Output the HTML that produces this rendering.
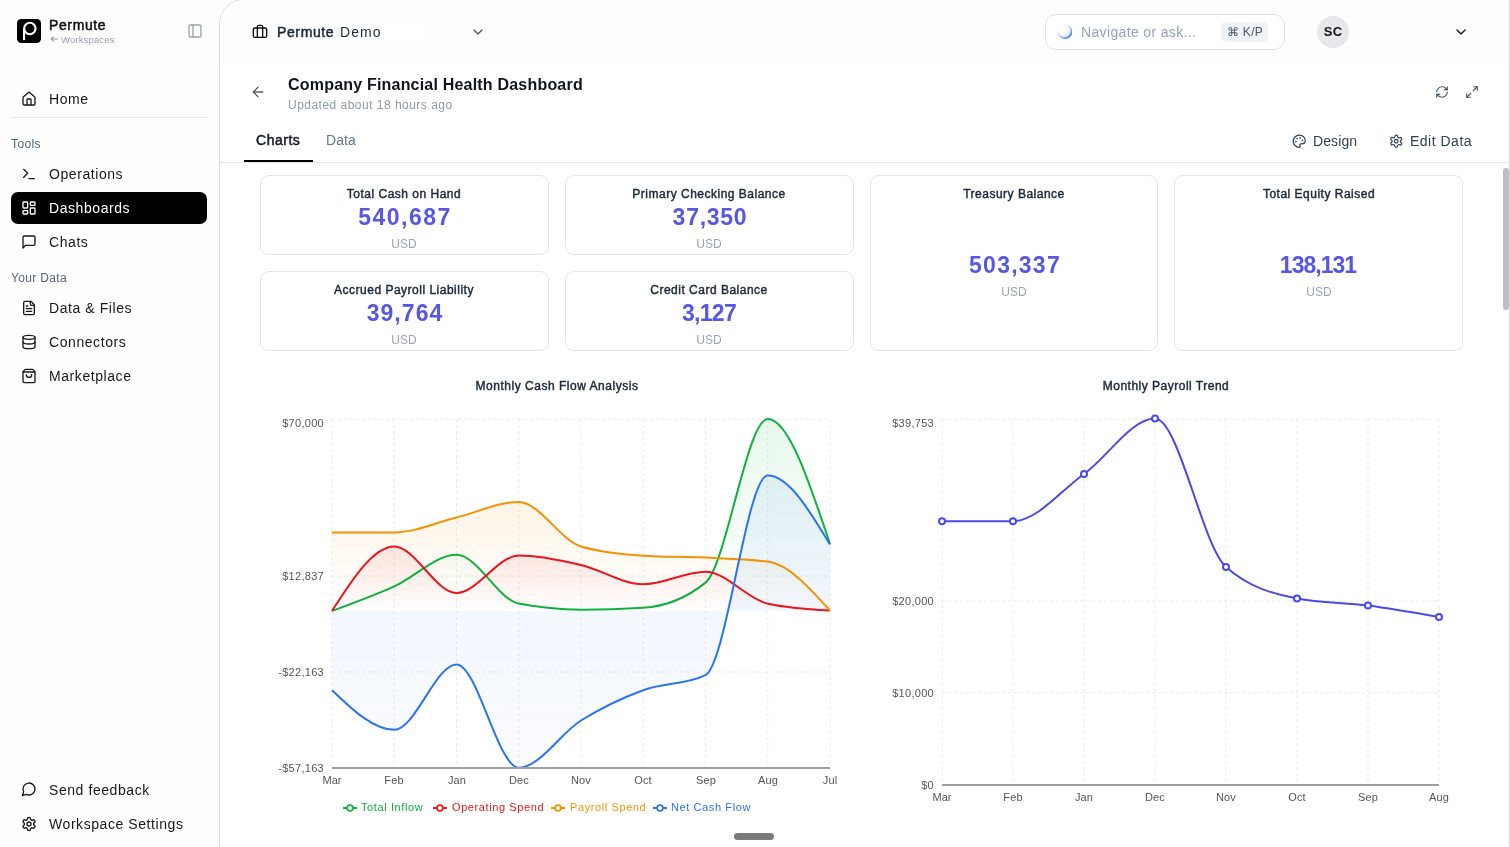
<!DOCTYPE html>
<html><head><meta charset="utf-8"><title>Company Financial Health Dashboard</title>
<style>
html,body{margin:0;padding:0;}
body{width:1510px;height:847px;overflow:hidden;position:relative;background:#fefefe;font-family:'Liberation Sans', sans-serif;}
.t{position:absolute;white-space:nowrap;line-height:1;will-change:transform;}
.ic{position:absolute;overflow:visible;}
.abs{position:absolute;}
</style></head><body>

<svg class="abs" style="left:17px;top:19px;width:24px;height:24px" viewBox="0 0 24 24"><rect x="0" y="0" width="24" height="24" rx="4.2" fill="#000"/><circle cx="12.85" cy="9.5" r="5.7" fill="none" stroke="#fff" stroke-width="2.1"/><rect x="6" y="9.5" width="2.1" height="11.6" fill="#fff"/></svg>
<div class="t" style="left:49.20px;top:18.28px;font-size:14px;font-weight:400;color:#111;letter-spacing:0.62px;-webkit-text-stroke:0.5px #111;">Permute</div>
<svg class="abs" style="left:50px;top:35.5px;width:8px;height:6px" viewBox="0 0 8 6"><path d="M7.5 3H1.2M3.4 0.9L1.2 3l2.2 2.1" fill="none" stroke="#8d99ab" stroke-width="1.1" stroke-linecap="round" stroke-linejoin="round"/></svg>
<div class="t" style="left:61.00px;top:35.12px;font-size:9.5px;font-weight:400;color:#94a0b2;letter-spacing:0.15px;">Workspaces</div>
<svg class="ic" style="left:187.00px;top:22.80px;width:16px;height:16px;" viewBox="0 0 24 24" fill="none" stroke="#9ca3af" stroke-width="2" stroke-linecap="round" stroke-linejoin="round"><rect width="18" height="18" x="3" y="3" rx="2"/><path d="M9 3v18"/></svg>
<svg class="ic" style="left:21.00px;top:91.00px;width:16px;height:16px;" viewBox="0 0 24 24" fill="none" stroke="#18181b" stroke-width="2" stroke-linecap="round" stroke-linejoin="round"><path d="M15 21v-8a1 1 0 0 0-1-1h-4a1 1 0 0 0-1 1v8"/><path d="M3 10a2 2 0 0 1 .709-1.528l7-5.999a2 2 0 0 1 2.582 0l7 5.999A2 2 0 0 1 21 10v9a2 2 0 0 1-2 2H5a2 2 0 0 1-2-2z"/></svg>
<div class="t" style="left:48.80px;top:92.38px;font-size:14px;font-weight:400;color:#18181b;letter-spacing:0.57px;">Home</div>
<div class="abs" style="left:10px;top:117px;width:198px;height:1px;background:#e4e6eb"></div>
<div class="t" style="left:11.30px;top:137.54px;font-size:12px;font-weight:400;color:#56657c;letter-spacing:0.4px;">Tools</div>
<svg class="ic" style="left:21.00px;top:165.70px;width:16px;height:16px;" viewBox="0 0 24 24" fill="none" stroke="#18181b" stroke-width="2" stroke-linecap="round" stroke-linejoin="round"><polyline points="4 17 10 11 4 5"/><line x1="12" x2="20" y1="19" y2="19"/></svg>
<div class="t" style="left:48.80px;top:167.08px;font-size:14px;font-weight:400;color:#18181b;letter-spacing:0.57px;">Operations</div>
<div class="abs" style="left:11px;top:192px;width:196px;height:32px;border-radius:7px;background:#000"></div>
<svg class="ic" style="left:21.00px;top:199.70px;width:16px;height:16px;" viewBox="0 0 24 24" fill="none" stroke="#fff" stroke-width="2" stroke-linecap="round" stroke-linejoin="round"><rect width="7" height="9" x="3" y="3" rx="1"/><rect width="7" height="5" x="14" y="3" rx="1"/><rect width="7" height="9" x="14" y="12" rx="1"/><rect width="7" height="5" x="3" y="16" rx="1"/></svg>
<div class="t" style="left:48.80px;top:201.08px;font-size:14px;font-weight:400;color:#fff;letter-spacing:0.57px;">Dashboards</div>
<svg class="ic" style="left:21.00px;top:233.50px;width:16px;height:16px;" viewBox="0 0 24 24" fill="none" stroke="#18181b" stroke-width="2" stroke-linecap="round" stroke-linejoin="round"><path d="M21 15a2 2 0 0 1-2 2H7l-4 4V5a2 2 0 0 1 2-2h14a2 2 0 0 1 2 2z"/></svg>
<div class="t" style="left:48.80px;top:234.88px;font-size:14px;font-weight:400;color:#18181b;letter-spacing:0.57px;">Chats</div>
<div class="t" style="left:11.20px;top:271.84px;font-size:12px;font-weight:400;color:#56657c;letter-spacing:0.35px;">Your Data</div>
<svg class="ic" style="left:21.00px;top:300.00px;width:16px;height:16px;" viewBox="0 0 24 24" fill="none" stroke="#18181b" stroke-width="2" stroke-linecap="round" stroke-linejoin="round"><path d="M15 2H6a2 2 0 0 0-2 2v16a2 2 0 0 0 2 2h12a2 2 0 0 0 2-2V7Z"/><path d="M14 2v4a2 2 0 0 0 2 2h4"/><path d="M10 9H8"/><path d="M16 13H8"/><path d="M16 17H8"/></svg>
<div class="t" style="left:48.80px;top:301.38px;font-size:14px;font-weight:400;color:#18181b;letter-spacing:0.57px;">Data &amp; Files</div>
<svg class="ic" style="left:21.00px;top:333.90px;width:16px;height:16px;" viewBox="0 0 24 24" fill="none" stroke="#18181b" stroke-width="2" stroke-linecap="round" stroke-linejoin="round"><ellipse cx="12" cy="5" rx="9" ry="3"/><path d="M3 5V19A9 3 0 0 0 21 19V5"/><path d="M3 12A9 3 0 0 0 21 12"/></svg>
<div class="t" style="left:48.80px;top:335.28px;font-size:14px;font-weight:400;color:#18181b;letter-spacing:0.57px;">Connectors</div>
<svg class="ic" style="left:21.00px;top:367.60px;width:16px;height:16px;" viewBox="0 0 24 24" fill="none" stroke="#18181b" stroke-width="2" stroke-linecap="round" stroke-linejoin="round"><path d="M16 10a4 4 0 0 1-8 0"/><path d="M3.103 6.034h17.794"/><path d="M3.4 5.467a2 2 0 0 0-.4 1.2V20a2 2 0 0 0 2 2h14a2 2 0 0 0 2-2V6.667a2 2 0 0 0-.4-1.2l-2-2.667A2 2 0 0 0 17 2H7a2 2 0 0 0-1.6.8z"/></svg>
<div class="t" style="left:48.80px;top:368.98px;font-size:14px;font-weight:400;color:#18181b;letter-spacing:0.57px;">Marketplace</div>
<svg class="ic" style="left:21.00px;top:781.30px;width:16px;height:16px;" viewBox="0 0 24 24" fill="none" stroke="#18181b" stroke-width="2" stroke-linecap="round" stroke-linejoin="round"><path d="M7.9 20A9 9 0 1 0 4 16.1L2 22Z"/></svg>
<div class="t" style="left:48.80px;top:782.68px;font-size:14px;font-weight:400;color:#18181b;letter-spacing:0.57px;">Send feedback</div>
<svg class="ic" style="left:21.00px;top:815.50px;width:16px;height:16px;" viewBox="0 0 24 24" fill="none" stroke="#18181b" stroke-width="2" stroke-linecap="round" stroke-linejoin="round"><path d="M12.22 2h-.44a2 2 0 0 0-2 2v.18a2 2 0 0 1-1 1.73l-.43.25a2 2 0 0 1-2 0l-.15-.08a2 2 0 0 0-2.73.73l-.22.38a2 2 0 0 0 .73 2.73l.15.1a2 2 0 0 1 1 1.72v.51a2 2 0 0 1-1 1.74l-.15.09a2 2 0 0 0-.73 2.73l.22.38a2 2 0 0 0 2.73.73l.15-.08a2 2 0 0 1 2 0l.43.25a2 2 0 0 1 1 1.73V20a2 2 0 0 0 2 2h.44a2 2 0 0 0 2-2v-.18a2 2 0 0 1 1-1.73l.43-.25a2 2 0 0 1 2 0l.15.08a2 2 0 0 0 2.73-.73l.22-.39a2 2 0 0 0-.73-2.73l-.15-.08a2 2 0 0 1-1-1.74v-.5a2 2 0 0 1 1-1.74l.15-.09a2 2 0 0 0 .73-2.73l-.22-.38a2 2 0 0 0-2.73-.73l-.15.08a2 2 0 0 1-2 0l-.43-.25a2 2 0 0 1-1-1.73V4a2 2 0 0 0-2-2z"/><circle cx="12" cy="12" r="3"/></svg>
<div class="t" style="left:48.80px;top:816.88px;font-size:14px;font-weight:400;color:#18181b;letter-spacing:0.57px;">Workspace Settings</div>
<div class="abs" style="left:219px;top:-1px;width:1289px;height:900px;border:1px solid #d4d9e0;border-top-left-radius:25px;background:#fff;overflow:hidden">
<div class="abs" style="left:0;top:0;width:1289px;height:64px;background:#fdfdfe"></div>
</div>
<div class="abs" style="left:338px;top:24px;width:86px;height:18px;background:#fff"></div>
<svg class="ic" style="left:252.00px;top:24.00px;width:16px;height:16px;" viewBox="0 0 24 24" fill="none" stroke="#111" stroke-width="2" stroke-linecap="round" stroke-linejoin="round"><path d="M16 20V4a2 2 0 0 0-2-2h-4a2 2 0 0 0-2 2v16"/><rect width="20" height="14" x="2" y="6" rx="2"/></svg>
<div class="t" style="left:276.60px;top:25.18px;font-size:14px;font-weight:400;color:#1f2937;letter-spacing:0.62px;-webkit-text-stroke:0.5px #1f2937;">Permute</div>
<div class="t" style="left:339.80px;top:25.18px;font-size:14px;font-weight:400;color:#1f2937;letter-spacing:1.1px;">Demo</div>
<svg class="ic" style="left:470.00px;top:23.80px;width:16px;height:16px;" viewBox="0 0 24 24" fill="none" stroke="#475569" stroke-width="2" stroke-linecap="round" stroke-linejoin="round"><path d="m6 9 6 6 6-6"/></svg>
<div class="abs" style="left:1045px;top:14px;width:238px;height:34px;border:1px solid #dfe2e7;border-radius:11px;background:#fff"></div>
<svg class="abs" style="left:1057px;top:24px;width:16px;height:16px" viewBox="0 0 16 16"><defs><radialGradient id="orb" cx="0.42" cy="0.4" r="0.6"><stop offset="0" stop-color="#fff"/><stop offset="0.6" stop-color="#fff"/><stop offset="0.82" stop-color="#9cc0fa"/><stop offset="1" stop-color="#2a6ff0"/></radialGradient></defs><circle cx="8" cy="7.9" r="7.2" fill="url(#orb)"/></svg>
<div class="t" style="left:1080.70px;top:25.18px;font-size:14px;font-weight:400;color:#94a3b8;letter-spacing:0.35px;">Navigate or ask...</div>
<div class="abs" style="left:1221px;top:22.3px;width:47px;height:19.4px;border-radius:5px;background:#f1f2f5"></div>
<div class="t" style="left:844.50px;width:800px;text-align:center;top:26.34px;font-size:12px;font-weight:400;color:#475569;letter-spacing:0.3px;">&#8984; K/P</div>
<div class="abs" style="left:1317px;top:16px;width:32px;height:32px;border-radius:50%;background:#e7e7eb"></div>
<div class="t" style="left:933.00px;width:800px;text-align:center;top:25.41px;font-size:13px;font-weight:700;color:#111;letter-spacing:0.2px;">SC</div>
<svg class="ic" style="left:1453.00px;top:23.80px;width:16px;height:16px;" viewBox="0 0 24 24" fill="none" stroke="#111" stroke-width="2" stroke-linecap="round" stroke-linejoin="round"><path d="m6 9 6 6 6-6"/></svg>
<svg class="ic" style="left:250.00px;top:83.60px;width:16px;height:16px;" viewBox="0 0 24 24" fill="none" stroke="#545d6d" stroke-width="2" stroke-linecap="round" stroke-linejoin="round"><path d="m12 19-7-7 7-7"/><path d="M19 12H5"/></svg>
<div class="t" style="left:287.60px;top:76.82px;font-size:16px;font-weight:700;color:#0f1420;letter-spacing:0.2px;">Company Financial Health Dashboard</div>
<div class="t" style="left:287.60px;top:98.64px;font-size:12px;font-weight:400;color:#8e98a8;letter-spacing:0.48px;">Updated about 18 hours ago</div>
<svg class="ic" style="left:1435.00px;top:85.00px;width:14px;height:14px;" viewBox="0 0 24 24" fill="none" stroke="#475569" stroke-width="2" stroke-linecap="round" stroke-linejoin="round"><path d="M3 12a9 9 0 0 1 9-9 9.75 9.75 0 0 1 6.74 2.74L21 8"/><path d="M21 3v5h-5"/><path d="M21 12a9 9 0 0 1-9 9 9.75 9.75 0 0 1-6.74-2.74L3 16"/><path d="M8 16H3v5"/></svg>
<svg class="ic" style="left:1465.00px;top:85.00px;width:14px;height:14px;" viewBox="0 0 24 24" fill="none" stroke="#475569" stroke-width="2" stroke-linecap="round" stroke-linejoin="round"><polyline points="15 3 21 3 21 9"/><polyline points="9 21 3 21 3 15"/><line x1="21" x2="14" y1="3" y2="10"/><line x1="3" x2="10" y1="21" y2="14"/></svg>
<div class="t" style="left:256.40px;top:132.78px;font-size:14px;font-weight:400;color:#111827;letter-spacing:0.52px;-webkit-text-stroke:0.5px #111827;">Charts</div>
<div class="t" style="left:325.80px;top:132.78px;font-size:14px;font-weight:400;color:#64748b;letter-spacing:0.1px;">Data</div>
<div class="abs" style="left:220px;top:162px;width:1288px;height:1px;background:#e5e7eb"></div>
<div class="abs" style="left:244px;top:160px;width:69px;height:2px;background:#000"></div>
<svg class="ic" style="left:1292.35px;top:133.75px;width:14.5px;height:14.5px;" viewBox="0 0 24 24" fill="none" stroke="#334155" stroke-width="2" stroke-linecap="round" stroke-linejoin="round"><circle cx="13.5" cy="6.5" r=".5" fill="currentColor"/><circle cx="17.5" cy="10.5" r=".5" fill="currentColor"/><circle cx="8.5" cy="7.5" r=".5" fill="currentColor"/><circle cx="6.5" cy="12.5" r=".5" fill="currentColor"/><path d="M12 2C6.5 2 2 6.5 2 12s4.5 10 10 10c.926 0 1.648-.746 1.648-1.688 0-.437-.18-.835-.437-1.125-.29-.289-.438-.652-.438-1.125a1.64 1.64 0 0 1 1.668-1.668h1.996c3.051 0 5.555-2.503 5.555-5.554C21.965 6.012 17.461 2 12 2z"/></svg>
<div class="t" style="left:1313.00px;top:133.88px;font-size:14px;font-weight:400;color:#334155;letter-spacing:0.1px;">Design</div>
<svg class="ic" style="left:1389.35px;top:133.75px;width:14.5px;height:14.5px;" viewBox="0 0 24 24" fill="none" stroke="#334155" stroke-width="2" stroke-linecap="round" stroke-linejoin="round"><path d="M12.22 2h-.44a2 2 0 0 0-2 2v.18a2 2 0 0 1-1 1.73l-.43.25a2 2 0 0 1-2 0l-.15-.08a2 2 0 0 0-2.73.73l-.22.38a2 2 0 0 0 .73 2.73l.15.1a2 2 0 0 1 1 1.72v.51a2 2 0 0 1-1 1.74l-.15.09a2 2 0 0 0-.73 2.73l.22.38a2 2 0 0 0 2.73.73l.15-.08a2 2 0 0 1 2 0l.43.25a2 2 0 0 1 1 1.73V20a2 2 0 0 0 2 2h.44a2 2 0 0 0 2-2v-.18a2 2 0 0 1 1-1.73l.43-.25a2 2 0 0 1 2 0l.15.08a2 2 0 0 0 2.73-.73l.22-.39a2 2 0 0 0-.73-2.73l-.15-.08a2 2 0 0 1-1-1.74v-.5a2 2 0 0 1 1-1.74l.15-.09a2 2 0 0 0 .73-2.73l-.22-.38a2 2 0 0 0-2.73-.73l-.15.08a2 2 0 0 1-2 0l-.43-.25a2 2 0 0 1-1-1.73V4a2 2 0 0 0-2-2z"/><circle cx="12" cy="12" r="3"/></svg>
<div class="t" style="left:1410.20px;top:133.88px;font-size:14px;font-weight:400;color:#334155;letter-spacing:0.5px;">Edit Data</div>
<div class="abs" style="left:1503px;top:168px;width:6px;height:142px;border-radius:3px;background:#bdbec2"></div>
<div class="abs" style="left:260px;top:175px;width:286.75px;height:78px;border:1px solid #e2e4e9;border-radius:9px;background:#fff"></div>
<div class="t" style="left:4.38px;width:800px;text-align:center;top:188.24px;font-size:12px;font-weight:400;color:#1e293b;letter-spacing:0.5px;-webkit-text-stroke:0.45px #1e293b;">Total Cash on Hand</div>
<div class="t" style="left:5.12px;width:800px;text-align:center;top:206.01px;font-size:23px;font-weight:700;color:#5757e5;letter-spacing:1.5px;">540,687</div>
<div class="t" style="left:4.38px;width:800px;text-align:center;top:238.04px;font-size:12px;font-weight:400;color:#9ca3af;letter-spacing:0.1px;">USD</div>
<div class="abs" style="left:564.75px;top:175px;width:286.75px;height:78px;border:1px solid #e2e4e9;border-radius:9px;background:#fff"></div>
<div class="t" style="left:309.12px;width:800px;text-align:center;top:188.24px;font-size:12px;font-weight:400;color:#1e293b;letter-spacing:0.5px;-webkit-text-stroke:0.45px #1e293b;">Primary Checking Balance</div>
<div class="t" style="left:309.50px;width:800px;text-align:center;top:206.01px;font-size:23px;font-weight:700;color:#5757e5;letter-spacing:0.74px;">37,350</div>
<div class="t" style="left:309.12px;width:800px;text-align:center;top:238.04px;font-size:12px;font-weight:400;color:#9ca3af;letter-spacing:0.1px;">USD</div>
<div class="abs" style="left:260px;top:271px;width:286.75px;height:78px;border:1px solid #e2e4e9;border-radius:9px;background:#fff"></div>
<div class="t" style="left:4.38px;width:800px;text-align:center;top:284.14px;font-size:12px;font-weight:400;color:#1e293b;letter-spacing:0.5px;-webkit-text-stroke:0.45px #1e293b;">Accrued Payroll Liability</div>
<div class="t" style="left:4.90px;width:800px;text-align:center;top:301.91px;font-size:23px;font-weight:700;color:#5757e5;letter-spacing:1.06px;">39,764</div>
<div class="t" style="left:4.38px;width:800px;text-align:center;top:333.84px;font-size:12px;font-weight:400;color:#9ca3af;letter-spacing:0.1px;">USD</div>
<div class="abs" style="left:564.75px;top:271px;width:286.75px;height:78px;border:1px solid #e2e4e9;border-radius:9px;background:#fff"></div>
<div class="t" style="left:309.12px;width:800px;text-align:center;top:284.14px;font-size:12px;font-weight:400;color:#1e293b;letter-spacing:0.5px;-webkit-text-stroke:0.45px #1e293b;">Credit Card Balance</div>
<div class="t" style="left:308.77px;width:800px;text-align:center;top:301.91px;font-size:23px;font-weight:700;color:#5757e5;letter-spacing:-0.7px;">3,127</div>
<div class="t" style="left:309.12px;width:800px;text-align:center;top:333.84px;font-size:12px;font-weight:400;color:#9ca3af;letter-spacing:0.1px;">USD</div>
<div class="abs" style="left:869.5px;top:175px;width:286.75px;height:174px;border:1px solid #e2e4e9;border-radius:9px;background:#fff"></div>
<div class="t" style="left:613.88px;width:800px;text-align:center;top:188.14px;font-size:12px;font-weight:400;color:#1e293b;letter-spacing:0.5px;-webkit-text-stroke:0.45px #1e293b;">Treasury Balance</div>
<div class="t" style="left:614.50px;width:800px;text-align:center;top:253.81px;font-size:23px;font-weight:700;color:#5757e5;letter-spacing:1.25px;">503,337</div>
<div class="t" style="left:613.88px;width:800px;text-align:center;top:285.94px;font-size:12px;font-weight:400;color:#9ca3af;letter-spacing:0.1px;">USD</div>
<div class="abs" style="left:1174.25px;top:175px;width:286.75px;height:174px;border:1px solid #e2e4e9;border-radius:9px;background:#fff"></div>
<div class="t" style="left:918.62px;width:800px;text-align:center;top:188.14px;font-size:12px;font-weight:400;color:#1e293b;letter-spacing:0.5px;-webkit-text-stroke:0.45px #1e293b;">Total Equity Raised</div>
<div class="t" style="left:918.14px;width:800px;text-align:center;top:253.81px;font-size:23px;font-weight:700;color:#5757e5;letter-spacing:-0.97px;">138,131</div>
<div class="t" style="left:918.62px;width:800px;text-align:center;top:285.94px;font-size:12px;font-weight:400;color:#9ca3af;letter-spacing:0.1px;">USD</div>
<div class="t" style="left:156.75px;width:800px;text-align:center;top:379.74px;font-size:12px;font-weight:400;color:#1e293b;letter-spacing:0.52px;-webkit-text-stroke:0.45px #1e293b;">Monthly Cash Flow Analysis</div>
<svg class="abs" style="left:0;top:0;width:1510px;height:847px" viewBox="0 0 1510 847"><defs><linearGradient id="grg" x1="0" y1="0" x2="0" y2="1"><stop offset="0" stop-color="#0eb140" stop-opacity="0.1"/><stop offset="1" stop-color="#0eb140" stop-opacity="0"/></linearGradient><linearGradient id="grr" x1="0" y1="0" x2="0" y2="1"><stop offset="0" stop-color="#e8161e" stop-opacity="0.1"/><stop offset="1" stop-color="#e8161e" stop-opacity="0"/></linearGradient><linearGradient id="gro" x1="0" y1="0" x2="0" y2="1"><stop offset="0" stop-color="#f39205" stop-opacity="0.1"/><stop offset="1" stop-color="#f39205" stop-opacity="0"/></linearGradient><linearGradient id="grb" x1="0" y1="0" x2="0" y2="1"><stop offset="0" stop-color="#2a74f4" stop-opacity="0.08"/><stop offset="1" stop-color="#2a74f4" stop-opacity="0.025"/></linearGradient></defs><line x1="332.0" y1="419" x2="332.0" y2="768" stroke="#e9e9e9" stroke-dasharray="3 3"/><line x1="394.25" y1="419" x2="394.25" y2="768" stroke="#e9e9e9" stroke-dasharray="3 3"/><line x1="456.5" y1="419" x2="456.5" y2="768" stroke="#e9e9e9" stroke-dasharray="3 3"/><line x1="518.75" y1="419" x2="518.75" y2="768" stroke="#e9e9e9" stroke-dasharray="3 3"/><line x1="581.0" y1="419" x2="581.0" y2="768" stroke="#e9e9e9" stroke-dasharray="3 3"/><line x1="643.25" y1="419" x2="643.25" y2="768" stroke="#e9e9e9" stroke-dasharray="3 3"/><line x1="705.5" y1="419" x2="705.5" y2="768" stroke="#e9e9e9" stroke-dasharray="3 3"/><line x1="767.75" y1="419" x2="767.75" y2="768" stroke="#e9e9e9" stroke-dasharray="3 3"/><line x1="830.0" y1="419" x2="830.0" y2="768" stroke="#e9e9e9" stroke-dasharray="3 3"/><line x1="332" y1="419" x2="830" y2="419" stroke="#e9e9e9" stroke-dasharray="3 3"/><line x1="332" y1="576" x2="830" y2="576" stroke="#e9e9e9" stroke-dasharray="3 3"/><line x1="332" y1="672" x2="830" y2="672" stroke="#e9e9e9" stroke-dasharray="3 3"/><path d="M332.00,611.00C352.75,603.38 373.50,595.77 394.25,586.40C415.00,577.03 435.75,554.80 456.50,554.80C477.25,554.80 498.00,599.53 518.75,603.60C539.50,607.67 560.25,609.70 581.00,609.70C601.75,609.70 622.50,609.07 643.25,607.80C664.00,606.53 684.75,599.40 705.50,582.60C726.25,565.80 747.00,419.00 767.75,419.00C788.50,419.00 809.25,481.50 830.00,544.00L830.0,611L332.0,611Z" fill="url(#grg)" stroke="none"/><path d="M332.00,611.00C352.75,578.75 373.50,546.50 394.25,546.50C415.00,546.50 435.75,593.00 456.50,593.00C477.25,593.00 498.00,555.60 518.75,555.60C539.50,555.60 560.25,560.23 581.00,565.00C601.75,569.77 622.50,584.20 643.25,584.20C664.00,584.20 684.75,571.70 705.50,571.70C726.25,571.70 747.00,599.17 767.75,603.70C788.50,608.23 809.25,609.37 830.00,610.50L830.0,611L332.0,611Z" fill="url(#grr)" stroke="none"/><path d="M332.00,532.40C352.75,532.40 373.50,532.40 394.25,532.40C415.00,532.40 435.75,522.57 456.50,517.50C477.25,512.43 498.00,502.00 518.75,502.00C539.50,502.00 560.25,540.37 581.00,546.50C601.75,552.63 622.50,554.43 643.25,555.70C664.00,556.97 684.75,556.62 705.50,557.60C726.25,558.58 747.00,558.93 767.75,561.60C788.50,564.27 809.25,587.38 830.00,610.50L830.0,611L332.0,611Z" fill="url(#gro)" stroke="none"/><path d="M332.00,690.20C352.75,710.00 373.50,729.80 394.25,729.80C415.00,729.80 435.75,664.40 456.50,664.40C477.25,664.40 498.00,767.70 518.75,767.70C539.50,767.70 560.25,733.42 581.00,720.50C601.75,707.58 622.50,697.77 643.25,690.20C664.00,682.63 684.75,685.17 705.50,675.10C726.25,665.03 747.00,475.50 767.75,475.50C788.50,475.50 809.25,510.00 830.00,544.50L830.0,611L332.0,611Z" fill="url(#grb)" stroke="none"/><path d="M332.00,611.00C352.75,603.38 373.50,595.77 394.25,586.40C415.00,577.03 435.75,554.80 456.50,554.80C477.25,554.80 498.00,599.53 518.75,603.60C539.50,607.67 560.25,609.70 581.00,609.70C601.75,609.70 622.50,609.07 643.25,607.80C664.00,606.53 684.75,599.40 705.50,582.60C726.25,565.80 747.00,419.00 767.75,419.00C788.50,419.00 809.25,481.50 830.00,544.00" fill="none" stroke="#0eb140" stroke-width="2"/><path d="M332.00,611.00C352.75,578.75 373.50,546.50 394.25,546.50C415.00,546.50 435.75,593.00 456.50,593.00C477.25,593.00 498.00,555.60 518.75,555.60C539.50,555.60 560.25,560.23 581.00,565.00C601.75,569.77 622.50,584.20 643.25,584.20C664.00,584.20 684.75,571.70 705.50,571.70C726.25,571.70 747.00,599.17 767.75,603.70C788.50,608.23 809.25,609.37 830.00,610.50" fill="none" stroke="#e8161e" stroke-width="2"/><path d="M332.00,532.40C352.75,532.40 373.50,532.40 394.25,532.40C415.00,532.40 435.75,522.57 456.50,517.50C477.25,512.43 498.00,502.00 518.75,502.00C539.50,502.00 560.25,540.37 581.00,546.50C601.75,552.63 622.50,554.43 643.25,555.70C664.00,556.97 684.75,556.62 705.50,557.60C726.25,558.58 747.00,558.93 767.75,561.60C788.50,564.27 809.25,587.38 830.00,610.50" fill="none" stroke="#f39205" stroke-width="2"/><path d="M332.00,690.20C352.75,710.00 373.50,729.80 394.25,729.80C415.00,729.80 435.75,664.40 456.50,664.40C477.25,664.40 498.00,767.70 518.75,767.70C539.50,767.70 560.25,733.42 581.00,720.50C601.75,707.58 622.50,697.77 643.25,690.20C664.00,682.63 684.75,685.17 705.50,675.10C726.25,665.03 747.00,475.50 767.75,475.50C788.50,475.50 809.25,510.00 830.00,544.50" fill="none" stroke="#2a74f4" stroke-width="2"/><line x1="332" y1="768" x2="830" y2="768" stroke="#9e9e9e" stroke-width="2"/><line x1="942" y1="419" x2="942" y2="785" stroke="#e9e9e9" stroke-dasharray="3 3"/><line x1="1013" y1="419" x2="1013" y2="785" stroke="#e9e9e9" stroke-dasharray="3 3"/><line x1="1084" y1="419" x2="1084" y2="785" stroke="#e9e9e9" stroke-dasharray="3 3"/><line x1="1155" y1="419" x2="1155" y2="785" stroke="#e9e9e9" stroke-dasharray="3 3"/><line x1="1226" y1="419" x2="1226" y2="785" stroke="#e9e9e9" stroke-dasharray="3 3"/><line x1="1297" y1="419" x2="1297" y2="785" stroke="#e9e9e9" stroke-dasharray="3 3"/><line x1="1368" y1="419" x2="1368" y2="785" stroke="#e9e9e9" stroke-dasharray="3 3"/><line x1="1439" y1="419" x2="1439" y2="785" stroke="#e9e9e9" stroke-dasharray="3 3"/><line x1="942" y1="419" x2="1439" y2="419" stroke="#e9e9e9" stroke-dasharray="3 3"/><line x1="942" y1="601" x2="1439" y2="601" stroke="#e9e9e9" stroke-dasharray="3 3"/><line x1="942" y1="693" x2="1439" y2="693" stroke="#e9e9e9" stroke-dasharray="3 3"/><path d="M942.00,521.20C965.67,521.20 989.33,521.20 1013.00,521.20C1036.67,521.20 1060.33,491.10 1084.00,474.00C1107.67,456.90 1131.33,418.60 1155.00,418.60C1178.67,418.60 1202.33,546.00 1226.00,567.00C1249.67,588.00 1273.33,593.77 1297.00,598.50C1320.67,603.23 1344.33,602.50 1368.00,605.60C1391.67,608.70 1415.33,612.90 1439.00,617.10" fill="none" stroke="#4a4aea" stroke-width="2"/><circle cx="942" cy="521.2" r="3" fill="#fff" stroke="#4a4aea" stroke-width="2"/><circle cx="1013" cy="521.2" r="3" fill="#fff" stroke="#4a4aea" stroke-width="2"/><circle cx="1084" cy="474" r="3" fill="#fff" stroke="#4a4aea" stroke-width="2"/><circle cx="1155" cy="418.6" r="3" fill="#fff" stroke="#4a4aea" stroke-width="2"/><circle cx="1226" cy="567" r="3" fill="#fff" stroke="#4a4aea" stroke-width="2"/><circle cx="1297" cy="598.5" r="3" fill="#fff" stroke="#4a4aea" stroke-width="2"/><circle cx="1368" cy="605.6" r="3" fill="#fff" stroke="#4a4aea" stroke-width="2"/><circle cx="1439" cy="617.1" r="3" fill="#fff" stroke="#4a4aea" stroke-width="2"/><line x1="942" y1="785" x2="1439" y2="785" stroke="#9e9e9e" stroke-width="2"/></svg>
<div class="t" style="left:-75.90px;width:400px;text-align:right;top:417.87px;font-size:11px;font-weight:400;color:#555;letter-spacing:0.3px;">$70,000</div>
<div class="t" style="left:-75.90px;width:400px;text-align:right;top:570.87px;font-size:11px;font-weight:400;color:#555;letter-spacing:0.3px;">$12,837</div>
<div class="t" style="left:-75.90px;width:400px;text-align:right;top:666.87px;font-size:11px;font-weight:400;color:#555;letter-spacing:0.3px;">-$22,163</div>
<div class="t" style="left:-75.90px;width:400px;text-align:right;top:762.87px;font-size:11px;font-weight:400;color:#555;letter-spacing:0.3px;">-$57,163</div>
<div class="t" style="left:-68.00px;width:800px;text-align:center;top:775.07px;font-size:11px;font-weight:400;color:#555;letter-spacing:0.1px;">Mar</div>
<div class="t" style="left:-5.75px;width:800px;text-align:center;top:775.07px;font-size:11px;font-weight:400;color:#555;letter-spacing:0.1px;">Feb</div>
<div class="t" style="left:56.50px;width:800px;text-align:center;top:775.07px;font-size:11px;font-weight:400;color:#555;letter-spacing:0.1px;">Jan</div>
<div class="t" style="left:118.75px;width:800px;text-align:center;top:775.07px;font-size:11px;font-weight:400;color:#555;letter-spacing:0.1px;">Dec</div>
<div class="t" style="left:181.00px;width:800px;text-align:center;top:775.07px;font-size:11px;font-weight:400;color:#555;letter-spacing:0.1px;">Nov</div>
<div class="t" style="left:243.25px;width:800px;text-align:center;top:775.07px;font-size:11px;font-weight:400;color:#555;letter-spacing:0.1px;">Oct</div>
<div class="t" style="left:305.50px;width:800px;text-align:center;top:775.07px;font-size:11px;font-weight:400;color:#555;letter-spacing:0.1px;">Sep</div>
<div class="t" style="left:367.75px;width:800px;text-align:center;top:775.07px;font-size:11px;font-weight:400;color:#555;letter-spacing:0.1px;">Aug</div>
<div class="t" style="left:430.00px;width:800px;text-align:center;top:775.07px;font-size:11px;font-weight:400;color:#555;letter-spacing:0.1px;">Jul</div>
<svg class="abs" style="left:342.9px;top:801px;width:14px;height:14px" viewBox="0 0 14 14"><line x1="0" y1="7" x2="14" y2="7" stroke="#0eb140" stroke-width="2"/><circle cx="7" cy="7" r="2.9" fill="#fff" stroke="#0eb140" stroke-width="1.7"/></svg>
<div class="t" style="left:361.00px;top:802.07px;font-size:11px;font-weight:400;color:#0eb140;letter-spacing:0.6px;">Total Inflow</div>
<svg class="abs" style="left:433.3px;top:801px;width:14px;height:14px" viewBox="0 0 14 14"><line x1="0" y1="7" x2="14" y2="7" stroke="#e8161e" stroke-width="2"/><circle cx="7" cy="7" r="2.9" fill="#fff" stroke="#e8161e" stroke-width="1.7"/></svg>
<div class="t" style="left:451.60px;top:802.07px;font-size:11px;font-weight:400;color:#e8161e;letter-spacing:0.6px;">Operating Spend</div>
<svg class="abs" style="left:551.3px;top:801px;width:14px;height:14px" viewBox="0 0 14 14"><line x1="0" y1="7" x2="14" y2="7" stroke="#f39205" stroke-width="2"/><circle cx="7" cy="7" r="2.9" fill="#fff" stroke="#f39205" stroke-width="1.7"/></svg>
<div class="t" style="left:569.60px;top:802.07px;font-size:11px;font-weight:400;color:#f39205;letter-spacing:0.6px;">Payroll Spend</div>
<svg class="abs" style="left:652.7px;top:801px;width:14px;height:14px" viewBox="0 0 14 14"><line x1="0" y1="7" x2="14" y2="7" stroke="#2a74f4" stroke-width="2"/><circle cx="7" cy="7" r="2.9" fill="#fff" stroke="#2a74f4" stroke-width="1.7"/></svg>
<div class="t" style="left:671.00px;top:802.07px;font-size:11px;font-weight:400;color:#2a74f4;letter-spacing:0.6px;">Net Cash Flow</div>
<div class="t" style="left:766.40px;width:800px;text-align:center;top:379.74px;font-size:12px;font-weight:400;color:#1e293b;letter-spacing:0.5px;-webkit-text-stroke:0.45px #1e293b;">Monthly Payroll Trend</div>
<div class="t" style="left:533.50px;width:400px;text-align:right;top:417.87px;font-size:11px;font-weight:400;color:#555;letter-spacing:0.3px;">$39,753</div>
<div class="t" style="left:533.50px;width:400px;text-align:right;top:595.87px;font-size:11px;font-weight:400;color:#555;letter-spacing:0.3px;">$20,000</div>
<div class="t" style="left:533.50px;width:400px;text-align:right;top:687.87px;font-size:11px;font-weight:400;color:#555;letter-spacing:0.3px;">$10,000</div>
<div class="t" style="left:533.50px;width:400px;text-align:right;top:779.87px;font-size:11px;font-weight:400;color:#555;letter-spacing:0.3px;">$0</div>
<div class="t" style="left:542.00px;width:800px;text-align:center;top:791.77px;font-size:11px;font-weight:400;color:#555;letter-spacing:0.1px;">Mar</div>
<div class="t" style="left:613.00px;width:800px;text-align:center;top:791.77px;font-size:11px;font-weight:400;color:#555;letter-spacing:0.1px;">Feb</div>
<div class="t" style="left:684.00px;width:800px;text-align:center;top:791.77px;font-size:11px;font-weight:400;color:#555;letter-spacing:0.1px;">Jan</div>
<div class="t" style="left:755.00px;width:800px;text-align:center;top:791.77px;font-size:11px;font-weight:400;color:#555;letter-spacing:0.1px;">Dec</div>
<div class="t" style="left:826.00px;width:800px;text-align:center;top:791.77px;font-size:11px;font-weight:400;color:#555;letter-spacing:0.1px;">Nov</div>
<div class="t" style="left:897.00px;width:800px;text-align:center;top:791.77px;font-size:11px;font-weight:400;color:#555;letter-spacing:0.1px;">Oct</div>
<div class="t" style="left:968.00px;width:800px;text-align:center;top:791.77px;font-size:11px;font-weight:400;color:#555;letter-spacing:0.1px;">Sep</div>
<div class="t" style="left:1039.00px;width:800px;text-align:center;top:791.77px;font-size:11px;font-weight:400;color:#555;letter-spacing:0.1px;">Aug</div>
<div class="abs" style="left:734px;top:833px;width:40px;height:7px;border-radius:4px;background:#7a7a7a"></div>
</body></html>
